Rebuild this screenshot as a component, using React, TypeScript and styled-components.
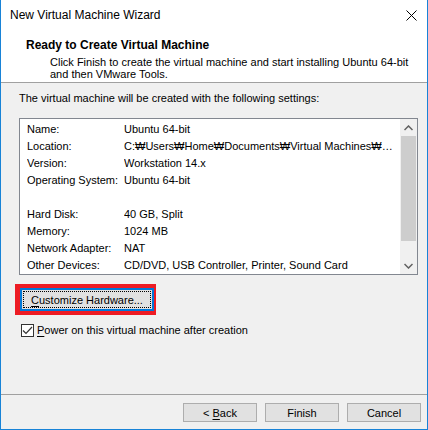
import React from "react";
import styled, { createGlobalStyle } from "styled-components";

const Global = createGlobalStyle`
  html, body { margin: 0; padding: 0; background: #f0f0f0; }
  body { font-family: "Liberation Sans", "Noto Sans CJK KR", sans-serif; font-size: 11px; line-height: 15px; color: #000; }
  * { box-sizing: border-box; }
`;

const Window = styled.div`
  width: 428px;
  height: 430px;
  display: flex;
  flex-direction: column;
  background: #f0f0f0;
  border: 1px solid #1883d7;
  border-top: none;
`;

const TitleBar = styled.div`
  height: 30px;
  flex: none;
  display: flex;
  align-items: center;
  justify-content: space-between;
  background: #fff;
  padding-left: 9px;
  padding-right: 9px;
  font-size: 12px;
  color: #000;
`;

const CloseBtn = styled.div`
  width: 11px;
  height: 11px;
  display: flex;
  align-items: center;
  justify-content: center;
  margin-right: 1px;
`;

const Header = styled.div`
  height: 53px;
  flex: none;
  background: #fff;
  border-bottom: 1px solid #a0a0a0;
  padding: 8px 0 0 25px;
`;

const HeaderTitle = styled.div`
  font-weight: 700;
  font-size: 12px;
  line-height: 15px;
  margin-bottom: 3px;
`;

const HeaderSub = styled.div`
  padding-left: 24px;
  line-height: 12px;
  white-space: nowrap;
`;

const Body = styled.div`
  flex: 1;
  display: flex;
  flex-direction: column;
  padding: 8px 10px 0 18px;
`;

const Intro = styled.div`
  line-height: 15px;
  margin-bottom: 12px;
`;

const ListBox = styled.div`
  width: 399px;
  height: 157px;
  background: #fff;
  border: 1px solid #828790;
  display: flex;
`;

const ListContent = styled.div`
  flex: 1;
  padding: 2px 0 0 7px;
  overflow: hidden;
`;

const Row = styled.div`
  display: grid;
  grid-template-columns: 97px 1fr;
  height: 17px;
  line-height: 17px;
  white-space: nowrap;
`;

const Cell = styled.span`
  overflow: hidden;
  text-overflow: ellipsis;
`;

const ScrollBar = styled.div`
  width: 17px;
  flex: none;
  display: flex;
  flex-direction: column;
  background: #f0f0f0;
`;

const ScrollArrow = styled.div`
  height: 17px;
  flex: none;
  display: flex;
  align-items: center;
  justify-content: center;
`;

const ScrollTrack = styled.div`
  flex: 1;
  display: flex;
  flex-direction: column;
`;

const ScrollThumb = styled.div`
  height: 105px;
  margin: 0 1px;
  background: #cdcdcd;
`;

const Highlight = styled.div`
  align-self: flex-start;
  margin: 9px 0 0 -4px;
  border: 5px solid #ed1c24;
  border-right-width: 2px;
  border-top-width: 4px;
  border-bottom-width: 4px;
  display: flex;
`;

const Button = styled.button<{ $focused?: boolean }>`
  width: ${(p) => (p.$focused ? "134px" : "74px")};
  height: ${(p) => (p.$focused ? "23px" : "19px")};
  padding: 0;
  background: #e1e1e1;
  border: 1px solid ${(p) => (p.$focused ? "#0078d7" : "#adadad")};
  font-family: inherit;
  font-size: 11px;
  color: #000;
  display: flex;
  align-items: center;
  justify-content: center;
  position: relative;
  box-shadow: ${(p) => (p.$focused ? "inset 0 0 0 1px #0078d7" : "none")};
`;

const FocusRect = styled.span`
  position: absolute;
  inset: 2px;
  border: 1px dotted #000;
`;

const U = styled.span`
  text-decoration: underline;
  text-underline-offset: 2px;
`;

const CheckRow = styled.label`
  display: flex;
  align-items: center;
  gap: 3px;
  margin-top: 8px;
  margin-left: 2px;
`;

const CheckBox = styled.span`
  width: 13px;
  height: 13px;
  border: 1px solid #333;
  background: #fff;
  display: flex;
  align-items: center;
  justify-content: center;
`;

const Footer = styled.div`
  height: 35px;
  flex: none;
  border-top: 1px solid #a0a0a0;
  display: flex;
  justify-content: flex-end;
  align-items: flex-start;
  gap: 8px;
  padding: 8px 6px 0 0;
`;

const rows: [string, string][] = [
  ["Name:", "Ubuntu 64-bit"],
  ["Location:", "C:\u20A9Users\u20A9Home\u20A9Documents\u20A9Virtual Machines\u20A9\u2026"],
  ["Version:", "Workstation 14.x"],
  ["Operating System:", "Ubuntu 64-bit"],
  ["", ""],
  ["Hard Disk:", "40 GB, Split"],
  ["Memory:", "1024 MB"],
  ["Network Adapter:", "NAT"],
  ["Other Devices:", "CD/DVD, USB Controller, Printer, Sound Card"],
];

export default function App() {
  return (
    <>
      <Global />
      <Window>
        <TitleBar>
          <span>New Virtual Machine Wizard</span>
          <CloseBtn>
            <svg width="11" height="11" viewBox="0 0 11 11">
              <path d="M0.5 0.5 L10.5 10.5 M10.5 0.5 L0.5 10.5" stroke="#000" strokeWidth="1" />
            </svg>
          </CloseBtn>
        </TitleBar>
        <Header>
          <HeaderTitle>Ready to Create Virtual Machine</HeaderTitle>
          <HeaderSub>
            Click Finish to create the virtual machine and start installing Ubuntu 64-bit
            <br />
            and then VMware Tools.
          </HeaderSub>
        </Header>
        <Body>
          <Intro>The virtual machine will be created with the following settings:</Intro>
          <ListBox>
            <ListContent>
              {rows.map(([k, v], i) => (
                <Row key={i}>
                  <Cell>{k}</Cell>
                  <Cell>{v}</Cell>
                </Row>
              ))}
            </ListContent>
            <ScrollBar>
              <ScrollArrow>
                <svg width="9" height="6" viewBox="0 0 9 6">
                  <path d="M0.5 5 L4.5 1 L8.5 5" stroke="#606060" strokeWidth="1.5" fill="none" />
                </svg>
              </ScrollArrow>
              <ScrollTrack>
                <ScrollThumb />
              </ScrollTrack>
              <ScrollArrow>
                <svg width="9" height="6" viewBox="0 0 9 6">
                  <path d="M0.5 1 L4.5 5 L8.5 1" stroke="#606060" strokeWidth="1.5" fill="none" />
                </svg>
              </ScrollArrow>
            </ScrollBar>
          </ListBox>
          <Highlight>
            <Button $focused>
              <FocusRect />
              <span>
                <U>C</U>ustomize Hardware...
              </span>
            </Button>
          </Highlight>
          <CheckRow>
            <CheckBox>
              <svg width="11" height="9" viewBox="0 0 11 9">
                <path d="M1 4.5 L4 7.5 L10 1" stroke="#333" strokeWidth="1.2" fill="none" />
              </svg>
            </CheckBox>
            <span>
              <U>P</U>ower on this virtual machine after creation
            </span>
          </CheckRow>
        </Body>
        <Footer>
          <Button>
            &lt;&nbsp;<U>B</U>ack
          </Button>
          <Button>Finish</Button>
          <Button>Cancel</Button>
        </Footer>
      </Window>
    </>
  );
}
